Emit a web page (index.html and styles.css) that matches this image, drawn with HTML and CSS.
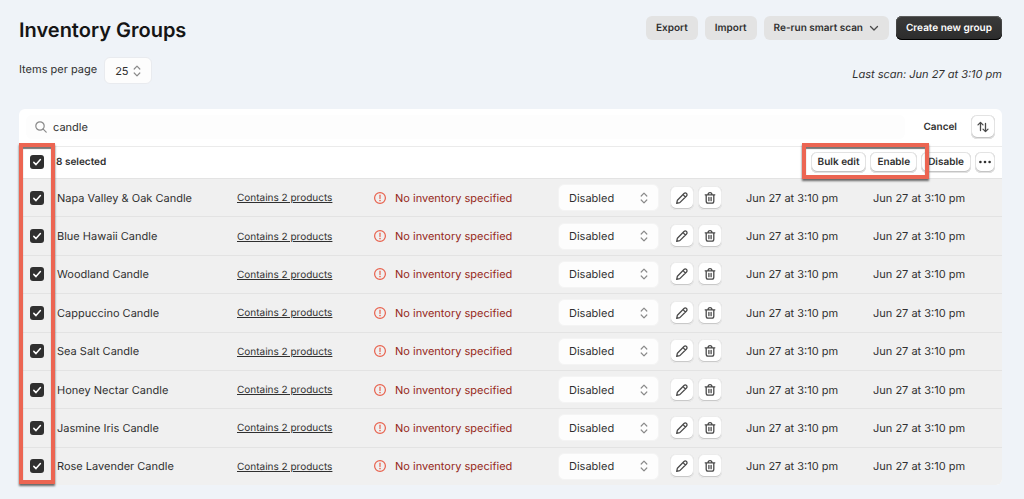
FILE: index.html
```html
<!DOCTYPE html>
<html lang="en">
<head>
<meta charset="utf-8">
<title>Inventory Groups</title>
<link rel="stylesheet" href="styles.css">
</head>
<body>
<svg class="sprite" aria-hidden="true">
  <symbol id="check" viewBox="0 0 14 14"><path d="M3.8 7.4 6 9.6l4.4-5" fill="none" stroke="#fff" stroke-width="1.5" stroke-linecap="round" stroke-linejoin="round"/></symbol>
  <symbol id="updown" viewBox="0 0 8 12"><path d="M1.2 4 4 1.2 6.8 4M1.2 8 4 10.8 6.8 8" fill="none" stroke="#8a8a8a" stroke-width="1.2" stroke-linecap="round" stroke-linejoin="round"/></symbol>
  <symbol id="alert" viewBox="0 0 14 14"><circle cx="7" cy="7" r="5.4" fill="none" stroke="#e8604c" stroke-width="1.2"/><path d="M7 4.2v3.2" stroke="#e8604c" stroke-width="1.2" stroke-linecap="round"/><circle cx="7" cy="9.6" r=".8" fill="#e8604c"/></symbol>
  <symbol id="pencil" viewBox="0 0 14 14"><path d="M1.7 12.3 2.4 9.2 9 2.5a1.7 1.7 0 0 1 2.5 2.5l-6.7 6.6-3.1.7ZM8 3.6l2.4 2.4" fill="none" stroke="#4a4a4a" stroke-width="1.3" stroke-linecap="round" stroke-linejoin="round"/></symbol>
  <symbol id="trash" viewBox="0 0 14 14"><path d="M2.2 3.8h9.6M5.1 3.6a1.9 1.9 0 0 1 3.8 0M3.2 4v6.3c0 1.2.7 1.9 1.9 1.9h3.8c1.2 0 1.9-.7 1.9-1.9V4M5.9 6.3v3.4M8.1 6.3v3.4" fill="none" stroke="#4a4a4a" stroke-width="1.3" stroke-linecap="round" stroke-linejoin="round"/></symbol>
</svg>
<main class="page">
  <header class="header">
    <h1 class="title">Inventory Groups</h1>
    <div class="actions">
      <button class="btn">Export</button>
      <button class="btn">Import</button>
      <button class="btn">Re-run smart scan <svg class="chevron" viewBox="0 0 10 10"><path d="M1.5 3.5 5 7l3.5-3.5" fill="none" stroke="#4a4a4a" stroke-width="1.3" stroke-linecap="round" stroke-linejoin="round"/></svg></button>
      <button class="btn btn-primary">Create new group</button>
    </div>
  </header>
  <div class="subheader">
    <div class="per-page">
      <label for="per-page">Items per page</label>
      <span class="select select-small"><select id="per-page"><option>25</option></select><svg><use href="#updown"/></svg></span>
    </div>
    <em class="last-scan">Last scan: Jun 27 at 3:10 pm</em>
  </div>
  <section class="card">
    <div class="search-row">
      <label class="search">
        <svg viewBox="0 0 12 12"><circle cx="5" cy="5" r="4.2" fill="none" stroke="#8a8a8a" stroke-width="1.2"/><path d="m8.2 8.2 3 3" stroke="#8a8a8a" stroke-width="1.2" stroke-linecap="round"/></svg>
        <input type="text" value="candle" aria-label="Search groups">
      </label>
      <button class="plain">Cancel</button>
      <button class="icon-btn" aria-label="Sort"><svg viewBox="0 0 14 14"><path d="M4.5 10.5V2.4M2 4.9l2.5-2.5L7 4.9M9.5 3.5v8.1M7 9.1l2.5 2.5L12 9.1" fill="none" stroke="#4a4a4a" stroke-width="1.3" stroke-linecap="round" stroke-linejoin="round"/></svg></button>
    </div>
    <div class="bulk-row">
      <label class="check"><input type="checkbox" checked aria-label="Select all"><svg><use href="#check"/></svg></label>
      <span class="selected">8 selected</span>
      <div class="bulk-actions">
        <button class="small-btn">Bulk edit</button>
        <button class="small-btn">Enable</button>
        <button class="small-btn">Disable</button>
        <button class="small-btn more" aria-label="More actions"><svg viewBox="0 0 14 4"><g fill="#303030"><circle cx="2.4" cy="2" r="1.3"/><circle cx="7" cy="2" r="1.3"/><circle cx="11.6" cy="2" r="1.3"/></g></svg></button>
        <div class="callout callout-actions"></div>
      </div>
    </div>
    <table class="groups">
      <colgroup><col class="c-check"><col class="c-name"><col class="c-products"><col class="c-status"><col class="c-state"><col class="c-tools"><col class="c-date"><col></colgroup>
      <tbody>
        <tr><td><label class="check"><input type="checkbox" checked aria-label="Napa Valley &amp; Oak Candle"><svg><use href="#check"/></svg></label></td><td>Napa Valley &amp; Oak Candle</td><td><a href="#">Contains 2 products</a></td><td><span class="status"><svg><use href="#alert"/></svg>No inventory specified</span></td><td><span class="select"><select aria-label="State"><option>Disabled</option></select><svg><use href="#updown"/></svg></span></td><td><span class="tools"><button class="icon-btn" aria-label="Edit"><svg><use href="#pencil"/></svg></button><button class="icon-btn" aria-label="Delete"><svg><use href="#trash"/></svg></button></span></td><td>Jun 27 at 3:10 pm</td><td>Jun 27 at 3:10 pm</td></tr>
        <tr><td><label class="check"><input type="checkbox" checked aria-label="Blue Hawaii Candle"><svg><use href="#check"/></svg></label></td><td>Blue Hawaii Candle</td><td><a href="#">Contains 2 products</a></td><td><span class="status"><svg><use href="#alert"/></svg>No inventory specified</span></td><td><span class="select"><select aria-label="State"><option>Disabled</option></select><svg><use href="#updown"/></svg></span></td><td><span class="tools"><button class="icon-btn" aria-label="Edit"><svg><use href="#pencil"/></svg></button><button class="icon-btn" aria-label="Delete"><svg><use href="#trash"/></svg></button></span></td><td>Jun 27 at 3:10 pm</td><td>Jun 27 at 3:10 pm</td></tr>
        <tr><td><label class="check"><input type="checkbox" checked aria-label="Woodland Candle"><svg><use href="#check"/></svg></label></td><td>Woodland Candle</td><td><a href="#">Contains 2 products</a></td><td><span class="status"><svg><use href="#alert"/></svg>No inventory specified</span></td><td><span class="select"><select aria-label="State"><option>Disabled</option></select><svg><use href="#updown"/></svg></span></td><td><span class="tools"><button class="icon-btn" aria-label="Edit"><svg><use href="#pencil"/></svg></button><button class="icon-btn" aria-label="Delete"><svg><use href="#trash"/></svg></button></span></td><td>Jun 27 at 3:10 pm</td><td>Jun 27 at 3:10 pm</td></tr>
        <tr><td><label class="check"><input type="checkbox" checked aria-label="Cappuccino Candle"><svg><use href="#check"/></svg></label></td><td>Cappuccino Candle</td><td><a href="#">Contains 2 products</a></td><td><span class="status"><svg><use href="#alert"/></svg>No inventory specified</span></td><td><span class="select"><select aria-label="State"><option>Disabled</option></select><svg><use href="#updown"/></svg></span></td><td><span class="tools"><button class="icon-btn" aria-label="Edit"><svg><use href="#pencil"/></svg></button><button class="icon-btn" aria-label="Delete"><svg><use href="#trash"/></svg></button></span></td><td>Jun 27 at 3:10 pm</td><td>Jun 27 at 3:10 pm</td></tr>
        <tr><td><label class="check"><input type="checkbox" checked aria-label="Sea Salt Candle"><svg><use href="#check"/></svg></label></td><td>Sea Salt Candle</td><td><a href="#">Contains 2 products</a></td><td><span class="status"><svg><use href="#alert"/></svg>No inventory specified</span></td><td><span class="select"><select aria-label="State"><option>Disabled</option></select><svg><use href="#updown"/></svg></span></td><td><span class="tools"><button class="icon-btn" aria-label="Edit"><svg><use href="#pencil"/></svg></button><button class="icon-btn" aria-label="Delete"><svg><use href="#trash"/></svg></button></span></td><td>Jun 27 at 3:10 pm</td><td>Jun 27 at 3:10 pm</td></tr>
        <tr><td><label class="check"><input type="checkbox" checked aria-label="Honey Nectar Candle"><svg><use href="#check"/></svg></label></td><td>Honey Nectar Candle</td><td><a href="#">Contains 2 products</a></td><td><span class="status"><svg><use href="#alert"/></svg>No inventory specified</span></td><td><span class="select"><select aria-label="State"><option>Disabled</option></select><svg><use href="#updown"/></svg></span></td><td><span class="tools"><button class="icon-btn" aria-label="Edit"><svg><use href="#pencil"/></svg></button><button class="icon-btn" aria-label="Delete"><svg><use href="#trash"/></svg></button></span></td><td>Jun 27 at 3:10 pm</td><td>Jun 27 at 3:10 pm</td></tr>
        <tr><td><label class="check"><input type="checkbox" checked aria-label="Jasmine Iris Candle"><svg><use href="#check"/></svg></label></td><td>Jasmine Iris Candle</td><td><a href="#">Contains 2 products</a></td><td><span class="status"><svg><use href="#alert"/></svg>No inventory specified</span></td><td><span class="select"><select aria-label="State"><option>Disabled</option></select><svg><use href="#updown"/></svg></span></td><td><span class="tools"><button class="icon-btn" aria-label="Edit"><svg><use href="#pencil"/></svg></button><button class="icon-btn" aria-label="Delete"><svg><use href="#trash"/></svg></button></span></td><td>Jun 27 at 3:10 pm</td><td>Jun 27 at 3:10 pm</td></tr>
        <tr><td><label class="check"><input type="checkbox" checked aria-label="Rose Lavender Candle"><svg><use href="#check"/></svg></label></td><td>Rose Lavender Candle</td><td><a href="#">Contains 2 products</a></td><td><span class="status"><svg><use href="#alert"/></svg>No inventory specified</span></td><td><span class="select"><select aria-label="State"><option>Disabled</option></select><svg><use href="#updown"/></svg></span></td><td><span class="tools"><button class="icon-btn" aria-label="Edit"><svg><use href="#pencil"/></svg></button><button class="icon-btn" aria-label="Delete"><svg><use href="#trash"/></svg></button></span></td><td>Jun 27 at 3:10 pm</td><td>Jun 27 at 3:10 pm</td></tr>
      </tbody>
    </table>
    <div class="callout callout-checks"></div>
  </section>
</main>
</body>
</html>
```
FILE: styles.css
```css
* { box-sizing: border-box; }
body {
  margin: 0;
  background: #eff3f8;
  color: #303030;
  font: 11px/16px Inter, "Liberation Sans", sans-serif;
  text-rendering: geometricPrecision;
}
button, input, select { font: inherit; color: inherit; margin: 0; text-rendering: inherit; }
button { border: 0; padding: 0; cursor: pointer; white-space: nowrap; }
svg { display: block; }
.sprite { position: absolute; width: 0; height: 0; }
.page { padding: 16px 22px 14px 19px; }

.header { display: flex; justify-content: space-between; align-items: flex-start; }
.title { margin: 0; font-size: 20px; line-height: 28px; font-weight: 600; color: #151515; }
.actions { display: flex; gap: 7px; }
.btn {
  display: flex;
  align-items: center;
  gap: 6px;
  height: 24px;
  padding: 0 10px;
  border-radius: 6px;
  background: #e3e3e3;
  font-size: 10px;
  font-weight: 600;
}
.chevron { width: 10px; height: 10px; }
.btn-primary {
  background: linear-gradient(#3a3a3a, #2c2c2c);
  color: #fff;
  box-shadow: inset 0 1px 0 #5c5c5c, inset 0 -1px 0 #000, inset 1px 0 0 #444, inset -1px 0 0 #444;
}

.subheader { display: flex; justify-content: space-between; margin-top: 13px; }
.per-page { display: flex; gap: 7px; }
.per-page label { padding-top: 4px; }
.last-scan { padding-top: 9px; }

.select { display: grid; align-items: center; width: 101px; }
.select > * { grid-area: 1 / 1; }
.select select {
  appearance: none;
  width: 100%;
  height: 27px;
  padding: 0 10px;
  border: 1px solid #f4f4f4;
  border-radius: 6px;
  background: #fdfdfd;
}
.select svg { width: 8px; height: 12px; justify-self: end; margin-right: 11px; pointer-events: none; }
.select-small { width: 48px; }
.select-small select { border-color: #e9ebef; }

.card {
  position: relative;
  margin-top: 25px;
  border-radius: 6px;
  background: #fff;
}
.search-row { display: flex; align-items: center; height: 38px; padding: 0 7px 1px; border-bottom: 1px solid #ebebeb; }
.search {
  display: flex;
  flex: 1;
  align-items: center;
  gap: 6px;
  height: 24px;
  padding: 0 9px;
  border-radius: 6px;
  background: #fdfdfd;
}
.search svg { width: 12px; height: 12px; }
.search input { flex: 1; border: 0; padding: 0; background: none; outline: 0; }
.plain { margin: 0 14px 0 18px; background: none; font-size: 10px; font-weight: 600; }
.icon-btn {
  display: grid;
  place-items: center;
  width: 24px;
  height: 24px;
  border-radius: 6px;
  background: #fff;
  box-shadow: inset 0 0 0 1px #e3e3e3, inset 0 -1px 0 1px #c4c4c4;
}
.icon-btn svg { width: 14px; height: 14px; }

.bulk-row { display: flex; align-items: center; height: 31px; padding: 0 7px 1px 11px; }
.selected { margin-left: 12px; font-size: 10px; font-weight: 600; }
.bulk-actions { position: relative; display: flex; gap: 4px; margin-left: auto; }
.small-btn {
  height: 21px;
  padding: 0 7px;
  border-radius: 6px;
  background: #fff;
  font-size: 10px;
  font-weight: 600;
  box-shadow: inset 0 0 0 1px #e3e3e3, inset 0 -1px 0 1px #c4c4c4;
}
.more { width: 20px; padding: 0 3px; }
.more svg { width: 14px; height: 4px; }

.check { display: grid; width: 14px; height: 14px; }
.check > * { grid-area: 1 / 1; width: 14px; height: 14px; }
.check input { appearance: none; border-radius: 3px; background: #303030; }
.check svg { pointer-events: none; z-index: 1; }

.groups {
  width: 100%;
  height: 307px;
  table-layout: fixed;
  border-collapse: separate;
  border-spacing: 0;
  border-radius: 0 0 6px 6px;
  background: #f0f0f0;
}
.c-check { width: 38px; }
.c-name { width: 180px; }
.c-products { width: 136px; }
.c-status { width: 185px; }
.c-state { width: 112px; }
.c-tools { width: 76px; }
.c-date { width: 127px; }
.groups td { padding: 0; border-top: 1px solid #e3e3e3; white-space: nowrap; vertical-align: middle; }
.groups td:first-child { padding-left: 11px; }
.groups a { color: inherit; font-size: 10px; text-underline-offset: 1px; }
.status { display: flex; align-items: center; gap: 8px; color: #96281a; }
.status svg { width: 14px; height: 14px; }
.tools { display: flex; gap: 4px; }
.tools .icon-btn { box-shadow: inset 0 0 0 1px #ececec, inset 0 -1px 0 1px #c9c9c9; }

.callout {
  position: absolute;
  border: 4px solid #ec6552;
  box-shadow: 0 2px 2px #666, inset 0 2px 1px #777;
  pointer-events: none;
}
.callout-checks { top: 34px; bottom: 1px; left: 0; width: 36px; }
.callout-actions { top: -9px; bottom: -6px; left: -9px; width: 127px; }
```
